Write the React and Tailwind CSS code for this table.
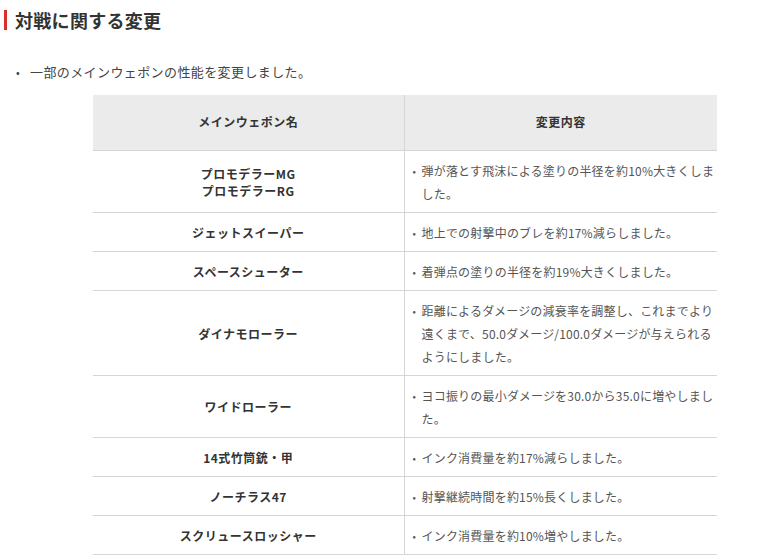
import React from 'react';

const rows = [
    { name: ['プロモデラーMG', 'プロモデラーRG'], desc: '弾が落とす飛沫による塗りの半径を約10%大きくしました。' },
    { name: ['ジェットスイーパー'], desc: '地上での射撃中のブレを約17%減らしました。' },
    { name: ['スペースシューター'], desc: '着弾点の塗りの半径を約19%大きくしました。' },
    { name: ['ダイナモローラー'], desc: '距離によるダメージの減衰率を調整し、これまでより遠くまで、50.0ダメージ/100.0ダメージが与えられるようにしました。' },
    { name: ['ワイドローラー'], desc: 'ヨコ振りの最小ダメージを30.0から35.0に増やしました。' },
    { name: ['14式竹筒銃・甲'], desc: 'インク消費量を約17%減らしました。' },
    { name: ['ノーチラス47'], desc: '射撃継続時間を約15%長くしました。' },
    { name: ['スクリュースロッシャー'], desc: 'インク消費量を約10%増やしました。' },
];

const App = () => {
    return (
        <div className="min-h-[557px] bg-white text-[#333] font-['Noto_Sans_CJK_JP','Noto_Sans',sans-serif]">
            <h2 className="flex items-center pt-[9px] pl-[4px] text-[18px] font-bold leading-[22px] tracking-[0.3px]">
                <span className="w-[3px] h-[20px] bg-[#d8312c] mr-[8px]" />
                対戦に関する変更
            </h2>

            <ul className="mt-[30px] pl-[16px] text-[13px] leading-[22px] text-[#444] tracking-[0.4px]">
                <li className="flex">
                    <span className="w-[14px] text-[11px]">•</span>
                    <span>一部のメインウェポンの性能を変更しました。</span>
                </li>
            </ul>

            <table className="ml-[93px] mt-[12px] w-[624px] border-collapse text-[12px]">
                <thead>
                    <tr className="bg-[#ebebeb]">
                        <th className="w-[311px] h-[55px] font-bold text-center border-b border-r border-[#d6d6d6] tracking-[0.5px]">メインウェポン名</th>
                        <th className="h-[55px] font-bold text-center border-b border-[#d6d6d6] tracking-[0.5px]">変更内容</th>
                    </tr>
                </thead>
                <tbody>
                    {rows.map((row, i) => (
                        <tr key={i}>
                            <td className="pt-2 pb-[7px] leading-[17px] font-bold text-center border-b border-r border-[#d6d6d6] align-middle tracking-[0.5px]">
                                {row.name.map((n) => (
                                    <div key={n}>{n}</div>
                                ))}
                            </td>
                            <td className="pt-2 pb-[7px] pl-[8px] pr-[1px] leading-[23px] text-[#555] border-b border-[#d6d6d6] align-top tracking-[0.2px]">
                                <div className="flex">
                                    <span className="shrink-0 w-[9px] text-[10px]">•</span>
                                    <span>{row.desc}</span>
                                </div>
                            </td>
                        </tr>
                    ))}
                </tbody>
            </table>
        </div>
    );
};

export default App;
